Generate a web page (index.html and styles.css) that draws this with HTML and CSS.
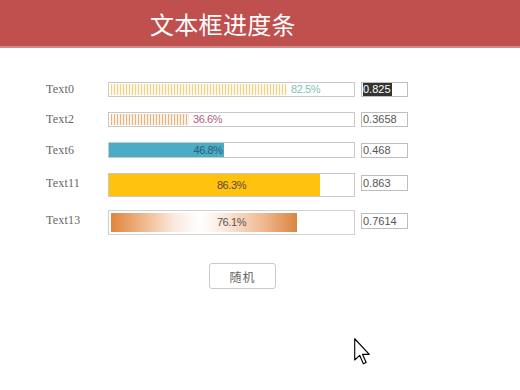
FILE: index.html
```html
<!DOCTYPE html>
<html lang="zh-CN">
<head>
<meta charset="UTF-8" />
<title>文本框进度条</title>
<link rel="stylesheet" href="styles.css">
</head>
<body>

<div class="header">
  <h1>文本框进度条</h1>
</div>

<div class="rows">
  <div class="row">
    <span class="label">Text0</span>
    <div class="bar striped">
      <div class="stripes yellow" style="width: 176px"></div>
      <span class="pct teal">82.5%</span>
    </div>
    <div class="value"><span class="picked">0.825</span></div>
  </div>

  <div class="row">
    <span class="label">Text2</span>
    <div class="bar striped">
      <div class="stripes orange" style="width: 78px"></div>
      <span class="pct rose">36.6%</span>
    </div>
    <div class="value">0.3658</div>
  </div>

  <div class="row">
    <span class="label">Text6</span>
    <div class="bar solid">
      <div class="fill blue" style="width: 46.8%"><span class="pct">46.8%</span></div>
    </div>
    <div class="value">0.468</div>
  </div>

  <div class="row tall">
    <span class="label">Text11</span>
    <div class="bar stack">
      <div class="fill gold" style="width: 86.3%"></div>
      <span class="pct">86.3%</span>
    </div>
    <div class="value">0.863</div>
  </div>

  <div class="row tall last">
    <span class="label">Text13</span>
    <div class="bar stack padded">
      <div class="fill peach" style="width: 77%"></div>
      <span class="pct">76.1%</span>
    </div>
    <div class="value">0.7614</div>
  </div>
</div>

<button class="random">随机</button>

<svg class="cursor" width="17" height="27" viewBox="0 0 12 19">
  <path d="M0.5 0.5 L0.5 15.5 L4 12.2 L6.6 18.2 L8.6 17.3 L6 11.5 L10.8 11.5 Z" fill="#fff" stroke="#000" stroke-width="0.8" stroke-linejoin="round"/>
</svg>

</body>
</html>
```

FILE: styles.css
```css
body {
  margin: 0;
  background: #fff;
  font-family: "Liberation Serif", "Noto Sans CJK SC", serif;
  color: #555;
  position: relative;
  height: 390px;
  overflow: hidden;
}
.header {
  background: #c0504d;
  height: 46px;
  border-bottom: 2px solid #d48a88;
  display: flex;
  align-items: center;
  padding-left: 150px;
}
.header h1 {
  margin: 0;
  color: #fff;
  font-family: "Noto Sans CJK SC", sans-serif;
  font-weight: 400;
  font-size: 24px;
  letter-spacing: 0.3px;
}
.rows {
  padding: 34px 0 0 46px;
}
.row {
  display: flex;
  align-items: center;
  margin-bottom: 15px;
}
.row.tall {
  margin-bottom: 13px;
}
.row.last {
  margin-bottom: 0;
}
.label {
  width: 62px;
  font-size: 12px;
  color: #666;
  letter-spacing: 0.2px;
}
.tall .label {
  margin-top: -4px;
}
.bar {
  width: 245px;
  border: 1px solid #c8c8c8;
  background: #fff;
  box-sizing: content-box;
}
.striped {
  height: 11px;
  padding: 1px 0 1px 2px;
  width: 243px;
  display: flex;
  align-items: center;
}
.stripes {
  height: 11px;
}
.stripes.yellow {
  background: repeating-linear-gradient(90deg, #efd283 0 1px, #fdf8ea 1px 3px);
}
.stripes.orange {
  background: repeating-linear-gradient(90deg, #e8b27f 0 1px, #fcf1e6 1px 3px);
}
.pct {
  font-family: "Liberation Sans", sans-serif;
  font-size: 11px;
  letter-spacing: -0.4px;
  line-height: 11px;
}
.striped .pct {
  margin-left: 4px;
}
.teal {
  color: #7cc3b5;
}
.rose {
  color: #b45c7c;
}
.solid {
  height: 14px;
}
.fill {
  height: 100%;
}
.fill.blue {
  background: #4bacc6;
  display: flex;
  align-items: center;
  justify-content: flex-end;
  color: #2d5e78;
}
.fill.blue .pct {
  padding-right: 1px;
}
.stack {
  display: grid;
  height: 22px;
}
.stack > * {
  grid-area: 1 / 1;
}
.stack .pct {
  justify-self: center;
  align-self: center;
  color: #5a4a30;
}
.fill.gold {
  background: #ffc20e;
}
.padded {
  height: 19px;
  padding: 2px;
  width: 241px;
  border-color: #cfcfcf;
}
.fill.peach {
  background: linear-gradient(90deg, #e0853b 0%, #f0b98e 18%, #fbe9de 34%, #ffffff 48%, #fbe6da 62%, #efb88f 82%, #da8540 100%);
}
.padded .pct {
  color: #555;
}
.value {
  margin-left: 6px;
  width: 44px;
  height: 13px;
  border: 1px solid #bdbdbd;
  font-family: "Liberation Sans", sans-serif;
  font-size: 11px;
  line-height: 13px;
  padding-left: 1px;
  color: #555;
}
.tall .value {
  height: 14px;
  line-height: 14px;
  margin-top: -4px;
}
.picked {
  background: #333;
  color: #fff;
  display: inline-block;
  padding-right: 1px;
}
.random {
  display: block;
  margin: 28px 0 0 209px;
  width: 67px;
  height: 26px;
  background: #fff;
  border: 1px solid #c9c9c9;
  border-radius: 3px;
  color: #666;
  font-family: "Noto Sans CJK SC", serif;
  font-size: 12px;
  letter-spacing: 1px;
}
.cursor {
  position: absolute;
  left: 354px;
  top: 338px;
}
```
